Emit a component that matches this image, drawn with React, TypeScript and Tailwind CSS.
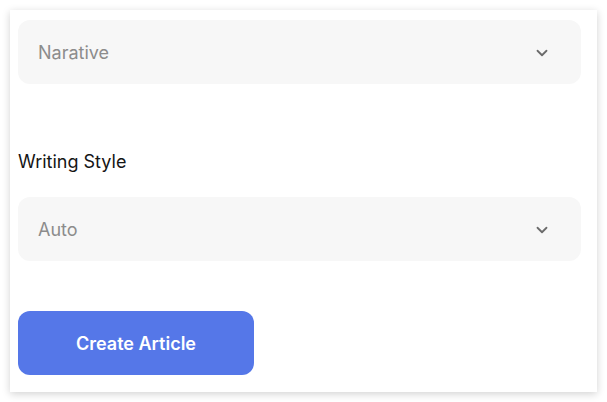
import React from 'react';

const Chevron: React.FC = () => (
  <svg className="mt-[2px]" width="18" height="18" viewBox="0 0 24 24" fill="none" stroke="#6b6b6b" strokeWidth="2.4" strokeLinecap="round" strokeLinejoin="round">
    <path d="M6 9l6 6 6-6" />
  </svg>
);

const SelectBox: React.FC<{ value: string }> = ({ value }) => (
  <div className="flex h-16 items-center justify-between rounded-xl bg-[#f7f7f7] pl-5 pr-[30px]">
    <span className="pt-[1px] text-[18px] text-[#8c8c8c]">{value}</span>
    <Chevron />
  </div>
);

const App: React.FC = () => {
  return (
    <div className="min-h-[402px] bg-white p-[10px]" style={{ fontFamily: 'Inter, "Noto Sans", sans-serif' }}>
      <div className="h-[382px] w-[587px] overflow-hidden bg-white pl-2 pr-4 pt-[10px] shadow-[0_2px_8px_rgba(0,0,0,0.18)]">
        <SelectBox value="Narative" />
        <div className="mt-[66px] text-[18px] leading-6 text-[#151515]">Writing Style</div>
        <div className="mt-[23px]">
          <SelectBox value="Auto" />
        </div>
        <button className="mt-[50px] flex h-16 w-[236px] items-center justify-center rounded-xl bg-[#5577e8] pt-[1px] text-[18px] font-semibold text-white">
          Create Article
        </button>
      </div>
    </div>
  );
};

export default App;
